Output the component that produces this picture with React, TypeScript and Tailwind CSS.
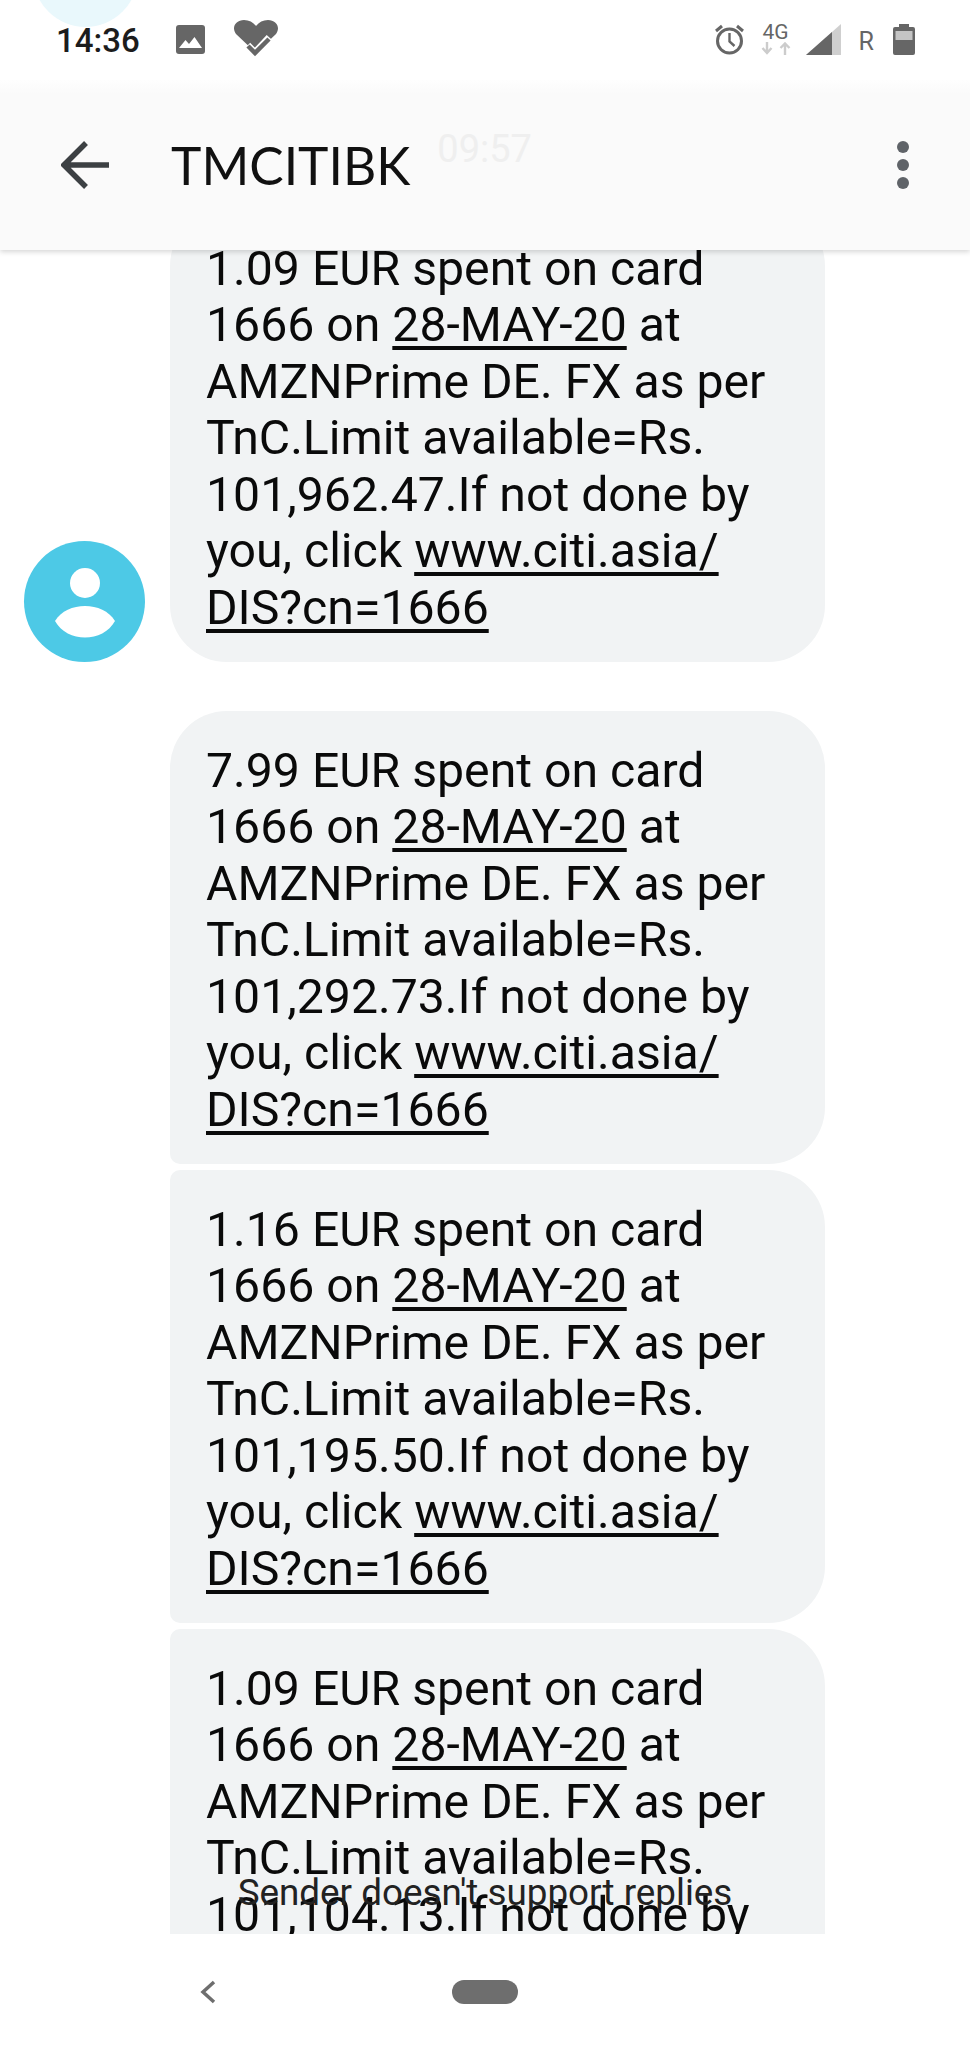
const roboto = "font-['Roboto',sans-serif]"

const messages = [
  { amount: "1.09", limit: "101,962.47", shape: "rounded-[57px]", avatar: true },
  { amount: "7.99", limit: "101,292.73", shape: "rounded-t-[57px] rounded-br-[57px] rounded-bl-[10px]" },
  { amount: "1.16", limit: "101,195.50", shape: "rounded-r-[57px] rounded-l-[10px]" },
  { amount: "1.09", limit: "101,104.13", shape: "rounded-tr-[57px] rounded-tl-[10px]" },
]

function StatusBar() {
  return (
    <div className="relative z-20 h-[80px] shrink-0 bg-white text-[#666]">
      <div className="absolute left-[33px] top-[-78px] h-[105px] w-[105px] rounded-full bg-[#e9f8fc]" />
      <div className="relative flex h-full items-start pl-[56px] pr-[55px] pt-[20px]">
        <span className={`${roboto} text-[33px] leading-[41px] font-medium text-[#1c1c1c]`}>14:36</span>
        <svg className="ml-[36px] mt-[5px]" width="29" height="29" viewBox="0 0 29 29">
          <rect width="29" height="29" rx="3" fill="#666" />
          <path d="M3 23 L9.5 15 L13 19 L18.5 12 L26 23 Z" fill="#fff" />
        </svg>
        <svg className="ml-[28px]" width="46" height="40" viewBox="0 0 46 40">
          <path d="M23 33 L3 14 C-2 7 3 0 11 0 C16 0 20 2 23 6 C26 2 30 0 35 0 C43 0 48 7 43 14 Z" fill="#666" />
          <path d="M14 26 L22 34 L37 18" fill="none" stroke="#fff" strokeWidth="9" />
          <path d="M15 26 L22 33 L36 19" fill="none" stroke="#666" strokeWidth="4.5" />
        </svg>
        <div className="ml-auto flex items-start">
          <svg className="mt-[4px]" width="29" height="31" viewBox="0 0 29 31">
            <circle cx="14.5" cy="17" r="12" fill="none" stroke="#666" strokeWidth="3" />
            <path d="M14.5 9 V17.5 L19.5 22" fill="none" stroke="#666" strokeWidth="2.4" />
            <path d="M1 7 L7 2 M28 7 L22 2" stroke="#666" strokeWidth="3" />
          </svg>
          <div className="ml-[17px] mt-[2px] flex w-[30px] flex-col items-center">
            <span className={`${roboto} text-[21px] leading-[20px] text-[#666]`}>4G</span>
            <svg width="30" height="13" viewBox="0 0 30 13">
              <path d="M6 0 V9 M1.5 6 L6 11 L10.5 6" fill="none" stroke="#ccc" strokeWidth="2.4" />
              <path d="M24 13 V3 M19.5 6 L24 1.5 L28.5 6" fill="none" stroke="#ccc" strokeWidth="2.4" />
            </svg>
          </div>
          <svg className="ml-[15px] mt-[4px]" width="35" height="31" viewBox="0 0 35 31">
            <path d="M0 31 L35 0 V31 Z" fill="#cfcfcf" />
            <path d="M0 31 L26 8 V31 Z" fill="#666" />
          </svg>
          <span className={`${roboto} ml-[18px] mt-[9px] text-[25px] leading-[25px] text-[#666]`}>R</span>
          <svg className="ml-[19px] mt-[4px]" width="22" height="31" viewBox="0 0 22 31">
            <path d="M6 0 H16 V3 H20 Q22 3 22 5 V29 Q22 31 20 31 H2 Q0 31 0 29 V5 Q0 3 2 3 H6 Z" fill="#666" />
            <rect x="2.5" y="7" width="17" height="9" fill="#c4c4c4" />
          </svg>
        </div>
      </div>
    </div>
  )
}

function Header() {
  return (
    <div className="relative z-10 flex h-[170px] shrink-0 items-center bg-[linear-gradient(#fefefe,#fafafa_14px)] pl-[61px] pr-[61px] shadow-[0_2px_5px_rgba(0,0,0,0.16)]">
      <svg className="mt-[-1px]" width="48" height="48" viewBox="0 0 48 48">
        <path d="M25 2 L3 24 L25 46 M3 24 H48" fill="none" stroke="#3c4043" strokeWidth="5.5" />
      </svg>
      <span className="ml-[62px] mt-[-1px] font-['Lato',sans-serif] text-[51.5px] leading-[60px] text-[#111]">TMCITIBK</span>
      <span className={`${roboto} ml-[27px] mt-[-32px] text-[38px] leading-[40px] text-[#efefef]`}>09:57</span>
      <div className="ml-auto flex flex-col gap-[6px]">
        <span className="h-3 w-3 rounded-full bg-[#5f6368]" />
        <span className="h-3 w-3 rounded-full bg-[#5f6368]" />
        <span className="h-3 w-3 rounded-full bg-[#5f6368]" />
      </div>
    </div>
  )
}

function Bubble({ amount, limit, shape }: { amount: string; limit: string; shape: string }) {
  return (
    <div className={`w-[655px] shrink-0 bg-[#f1f3f4] pl-[36px] pr-[30px] pt-[31.5px] pb-[26px] ${roboto} text-[48.2px] leading-[56.5px] whitespace-nowrap text-[#0a0a0a] ${shape}`}>
      <div>{amount} EUR spent on card</div>
      <div>
        1666 on <span className="underline underline-offset-[5px]">28-MAY-20</span> at
      </div>
      <div>AMZNPrime DE. FX as per</div>
      <div>TnC.Limit available=Rs.</div>
      <div>{limit}.If not done by</div>
      <div>
        you, click <span className="underline underline-offset-[5px]">www.citi.asia/</span>
      </div>
      <div>
        <span className="underline underline-offset-[5px]">DIS?cn=1666</span>
      </div>
    </div>
  )
}

function Avatar() {
  return (
    <div className="flex h-[121px] w-[121px] shrink-0 flex-col items-center rounded-full bg-[#4dc9e6]">
      <span className="mt-[27px] h-[30px] w-[30px] rounded-full bg-white" />
      <svg className="mt-[8px]" width="60" height="32" viewBox="0 0 60 32">
        <path d="M0 15 C12 -5 48 -5 60 15 C48 37 12 37 0 15 Z" fill="#fff" />
      </svg>
    </div>
  )
}

export default function App() {
  return (
    <div className="relative flex h-[2048px] w-[970px] flex-col overflow-hidden bg-white">
      <StatusBar />
      <Header />
      <div className="flex-1 overflow-hidden">
        <div className="-mt-[41px] flex flex-col">
          <div className="flex items-end pl-[24px] mb-[49px]">
            <Avatar />
            <div className="ml-[25px]">
              <Bubble {...messages[0]} />
            </div>
          </div>
          <div className="pl-[170px] mb-[6px]">
            <Bubble {...messages[1]} />
          </div>
          <div className="pl-[170px] mb-[6px]">
            <Bubble {...messages[2]} />
          </div>
          <div className="pl-[170px]">
            <Bubble {...messages[3]} />
          </div>
        </div>
      </div>
      <div className="absolute left-0 right-0 top-[1870px] text-center">
        <span className={`${roboto} text-[36.8px] leading-[46px] text-[#222]`}>Sender doesn't support replies</span>
      </div>
      <div className="flex h-[114px] shrink-0 items-start bg-white pl-[200px] pt-[46px]">
        <svg width="16" height="24" viewBox="0 0 16 24">
          <path d="M14 2 L3 12 L14 22" fill="none" stroke="#6e6e6e" strokeWidth="3.5" />
        </svg>
        <div className="ml-[236px] h-[24px] w-[66px] rounded-full bg-[#6e6e6e]" />
      </div>
    </div>
  )
}
